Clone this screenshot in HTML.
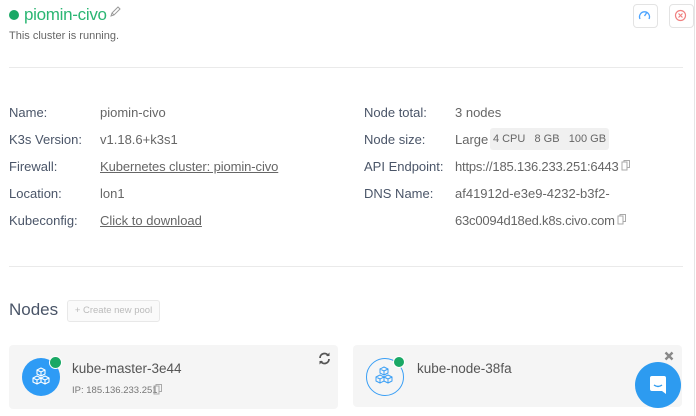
<!DOCTYPE html>
<html><head><style>
body{margin:0;width:696px;height:416px;overflow:hidden;background:#fff;font-family:"Liberation Sans",sans-serif;position:relative}
.a{position:absolute;white-space:nowrap}
.l{color:#4a5568;font-size:13px}
.v{color:#666;font-size:13px}
.u{text-decoration:underline}
.hr{position:absolute;left:9px;width:674px;height:1px;background:#eaeaea}
.card{position:absolute;background:#f5f5f5;border-radius:4px}
.tag{background:#f0f0f0;border-radius:3px;font-size:11px;color:#666}
</style></head><body>
<div style="position:absolute;right:1px;top:0;width:1px;height:416px;background:#e5e5e5"></div>
<div class="a" style="left:9px;top:10px;width:10px;height:10px;border-radius:50%;background:#1aa865"></div>
<div class="a" style="left:24px;top:5px;font-size:17px;color:#2bb673;letter-spacing:-0.3px">piomin-civo</div>
<svg class="a" style="left:109px;top:5px" width="12" height="13" viewBox="0 0 12 13"><path d="M2 11l1-3 6-6 2 2-6 6z M3 8l2 2" fill="none" stroke="#999" stroke-width="1"/></svg>
<div class="a" style="left:9px;top:30px;font-size:11px;color:#666">This cluster is running.</div>
<div class="a" style="left:633px;top:4px;width:23px;height:22px;border:1px solid #e3e3e3;border-radius:4px"></div>
<svg class="a" style="left:638px;top:9px" width="13" height="12" viewBox="0 0 13 12"><path d="M2 10A5 5 0 1 1 11 10M6.5 7l2-3" fill="none" stroke="#4aa3ff" stroke-width="1.3"/></svg>
<div class="a" style="left:669px;top:4px;width:23px;height:22px;border:1px solid #e3e3e3;border-radius:4px"></div>
<svg class="a" style="left:674px;top:9px" width="13" height="13" viewBox="0 0 13 13"><circle cx="6.5" cy="6.5" r="5" fill="none" stroke="#f08080" stroke-width="1.2"/><path d="M4.5 4.5l4 4M8.5 4.5l-4 4" stroke="#f08080" stroke-width="1.2"/></svg>
<div class="hr" style="top:67px"></div>

<div class="a l" style="left:9px;top:105px">Name:</div><div class="a v" style="left:100px;top:105px">piomin-civo</div>
<div class="a l" style="left:9px;top:132px">K3s Version:</div><div class="a v" style="left:100px;top:132px">v1.18.6+k3s1</div>
<div class="a l" style="left:9px;top:159px">Firewall:</div><div class="a v u" style="left:100px;top:159px;letter-spacing:-0.1px">Kubernetes cluster: piomin-civo</div>
<div class="a l" style="left:9px;top:186px">Location:</div><div class="a v" style="left:100px;top:186px">lon1</div>
<div class="a l" style="left:9px;top:213px">Kubeconfig:</div><div class="a v u" style="left:100px;top:213px">Click to download</div>

<div class="a l" style="left:364px;top:105px">Node total:</div><div class="a v" style="left:455px;top:105px">3 nodes</div>
<div class="a l" style="left:364px;top:132px">Node size:</div><div class="a v" style="left:455px;top:132px">Large</div>
<div class="a tag" style="left:490px;top:128px;width:119px;height:22px;line-height:22px;text-align:center">4 CPU&nbsp;&nbsp;&nbsp;8 GB&nbsp;&nbsp;&nbsp;100 GB</div>
<div class="a l" style="left:364px;top:159px">API Endpoint:</div><div class="a v" style="left:455px;top:159px;letter-spacing:-0.2px">https://185.136.233.251:6443</div>
<svg class="a" style="left:621px;top:160px" width="10" height="11" viewBox="0 0 10 11"><path d="M1 2h5v8H1zM3 2V0.5h5.5v7H6" fill="none" stroke="#aaa" stroke-width="1"/></svg>
<div class="a l" style="left:364px;top:186px">DNS Name:</div><div class="a v" style="left:455px;top:186px">af41912d-e3e9-4232-b3f2-</div>
<div class="a v" style="left:455px;top:213px;letter-spacing:-0.2px">63c0094d18ed.k8s.civo.com</div>
<svg class="a" style="left:617px;top:214px" width="10" height="11" viewBox="0 0 10 11"><path d="M1 2h5v8H1zM3 2V0.5h5.5v7H6" fill="none" stroke="#aaa" stroke-width="1"/></svg>
<div class="hr" style="top:266px"></div>

<div class="a" style="left:9px;top:300px;font-size:17px;color:#4a5568">Nodes</div>
<div class="a" style="left:67px;top:300px;width:91px;height:20px;border:1px solid #e8e8e8;border-radius:3px;background:#fafafa;font-size:9.5px;color:#bbb;line-height:20px;text-align:center">+ Create new pool</div>

<div class="card" style="left:9px;top:345px;width:329px;height:64px"></div>
<div class="a" style="left:22px;top:358px;width:38px;height:38px;border-radius:50%;background:#2e9bf5"></div>
<svg class="a" style="left:29px;top:365px" width="24" height="24" viewBox="0 0 24 24"><g fill="none" stroke="#fff" stroke-width="1.1" stroke-linejoin="round"><path d="M12 3l4 2v4l-4 2-4-2V5z M8 5l4 2 4-2 M12 7v4"/><path d="M8 11l4 2v4l-4 2-4-2v-4z M4 13l4 2 4-2 M8 15v4"/><path d="M16 11l4 2v4l-4 2-4-2v-4z M12 13l4 2 4-2 M16 15v4"/></g></svg>
<div class="a" style="left:49px;top:356px;width:11px;height:11px;border-radius:50%;background:#1aa865;border:1px solid #fff"></div>
<div class="a" style="left:72px;top:361px;font-size:13.5px;color:#555">kube-master-3e44</div>
<div class="a" style="left:72px;top:385px;font-size:9.5px;color:#777">IP: 185.136.233.251</div>
<svg class="a" style="left:153px;top:384px" width="10" height="11" viewBox="0 0 10 11"><path d="M1 2h5v8H1zM3 2V0.5h5.5v7H6" fill="none" stroke="#aaa" stroke-width="1"/></svg>
<svg class="a" style="left:318px;top:352px" width="13" height="13" viewBox="0 0 13 13"><path d="M2 6A4.5 4.5 0 0 1 10.5 4M11 7A4.5 4.5 0 0 1 2.5 9" fill="none" stroke="#555" stroke-width="1.8"/><path d="M8 4h3.5V0.5zM5 9H1.5v3.5z" fill="#555"/></svg>

<div class="card" style="left:353px;top:345px;width:329px;height:62px"></div>
<div class="a" style="left:366px;top:358px;width:36px;height:36px;border-radius:50%;border:1px solid #3a9ff5"></div>
<svg class="a" style="left:372px;top:364px" width="24" height="24" viewBox="0 0 24 24"><g fill="none" stroke="#3a9ff5" stroke-width="1" stroke-linejoin="round"><path d="M12 3l4 2v4l-4 2-4-2V5z M8 5l4 2 4-2 M12 7v4"/><path d="M8 11l4 2v4l-4 2-4-2v-4z M4 13l4 2 4-2 M8 15v4"/><path d="M16 11l4 2v4l-4 2-4-2v-4z M12 13l4 2 4-2 M16 15v4"/></g></svg>
<div class="a" style="left:393px;top:356px;width:10px;height:10px;border-radius:50%;background:#1aa865;border:1px solid #fff"></div>
<div class="a" style="left:417px;top:361px;font-size:13.5px;color:#555">kube-node-38fa</div>
<svg class="a" style="left:664px;top:351px" width="10" height="10" viewBox="0 0 10 10"><path d="M1.5 1.5l7 7M8.5 1.5l-7 7" stroke="#888" stroke-width="2.4"/></svg>

<div class="a" style="left:635px;top:362px;width:46px;height:46px;border-radius:50%;background:#2d9bf0"></div>
<svg class="a" style="left:647px;top:374px" width="22" height="22" viewBox="0 0 22 22"><path d="M5 2h12a2 2 0 0 1 2 2v16l-4-3H5a2 2 0 0 1-2-2V4a2 2 0 0 1 2-2z" fill="#fff"/><path d="M7 11q4 3 8 0" fill="none" stroke="#2d9bf0" stroke-width="1.4"/></svg>
</body></html>
